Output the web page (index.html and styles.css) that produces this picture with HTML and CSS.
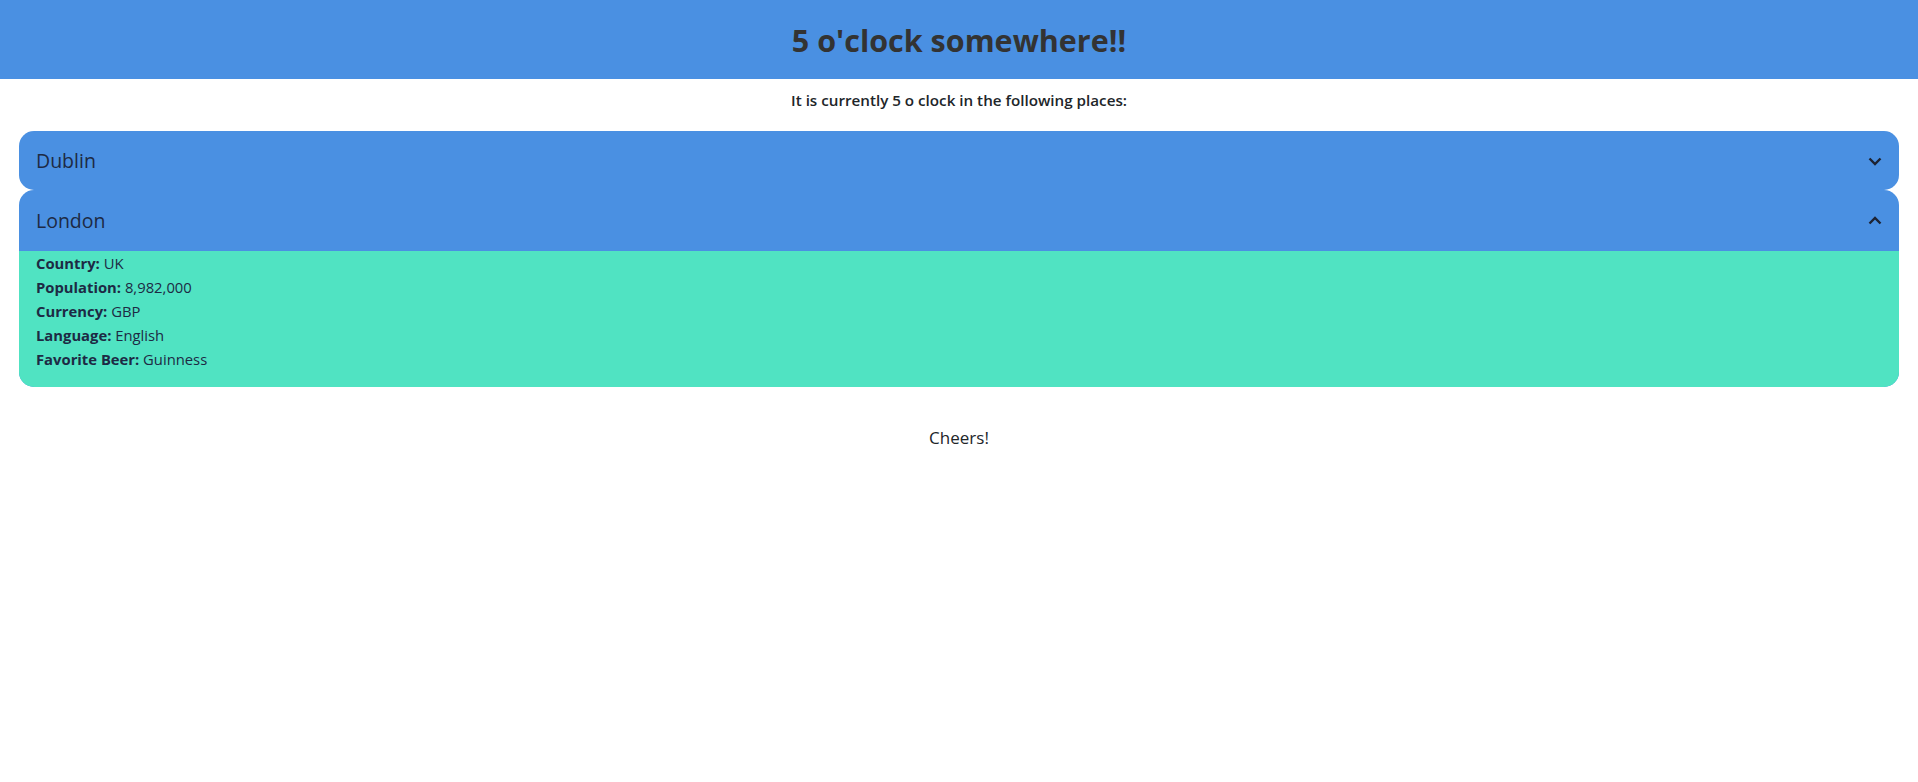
FILE: index.html
```html
<!DOCTYPE html>
<html lang="en">
<head>
<meta charset="utf-8">
<title>5 o'clock somewhere</title>
<link rel="stylesheet" href="styles.css">
</head>
<body>
<header class="topbar">
  <h1 class="title">5 o'clock somewhere!!</h1>
</header>
<p class="intro">It is currently 5 o clock in the following places:</p>
<div class="accordion">
  <div class="item">
    <div class="item-head">
      <span class="city">Dublin</span>
      <svg class="chev" width="16" height="16" viewBox="0 0 16 16"><path d="M2.5 5.5L8 11l5.5-5.5" fill="none" stroke="#1d2333" stroke-width="2.4"/></svg>
    </div>
  </div>
  <div class="item open">
    <div class="item-head">
      <span class="city">London</span>
      <svg class="chev" width="16" height="16" viewBox="0 0 16 16"><path d="M2.5 10.5L8 5l5.5 5.5" fill="none" stroke="#1d2333" stroke-width="2.4"/></svg>
    </div>
    <div class="item-body">
      <div class="row"><b>Country:</b> UK</div>
      <div class="row"><b>Population:</b> 8,982,000</div>
      <div class="row"><b>Currency:</b> GBP</div>
      <div class="row"><b>Language:</b> English</div>
      <div class="row"><b>Favorite Beer:</b> Guinness</div>
    </div>
  </div>
</div>
<p class="cheers">Cheers!</p>
</body>
</html>
```

FILE: styles.css
```css
* { box-sizing: border-box; }
body {
  margin: 0;
  font-family: "Open Sans", "Noto Sans", sans-serif;
  color: #212529;
  background: #fff;
}
.topbar {
  background: #4a90e2;
  height: 79px;
  display: flex;
  align-items: center;
  justify-content: center;
}
.title {
  margin: 0;
  font-size: 30.5px;
  font-weight: 700;
  color: #333;
}
.intro {
  margin: 11px 0 0;
  text-align: center;
  font-size: 15.2px;
  font-weight: 600;
  line-height: 20px;
  color: #212529;
}
.accordion {
  margin: 21px 19px 0;
  display: flex;
  flex-direction: column;
}
.item {
  border-radius: 15px;
  overflow: hidden;
  background: #4a90e2;
}
.item-head {
  height: 59px;
  display: flex;
  align-items: center;
  justify-content: space-between;
  padding: 0 16px 0 17px;
}
.item.open .item-head { height: 61px; }
.city {
  font-size: 19.5px;
  font-weight: 500;
  color: #1d2a44;
}
.chev { display: block; }
.item-body {
  background: #50e3c2;
  padding: 0 17px 16px;
  font-size: 14.8px;
  line-height: 24px;
  color: #1d2a44;
}
.cheers {
  margin: 39px 0 0;
  text-align: center;
  font-size: 17px;
  font-weight: 400;
  color: #212529;
}
```
